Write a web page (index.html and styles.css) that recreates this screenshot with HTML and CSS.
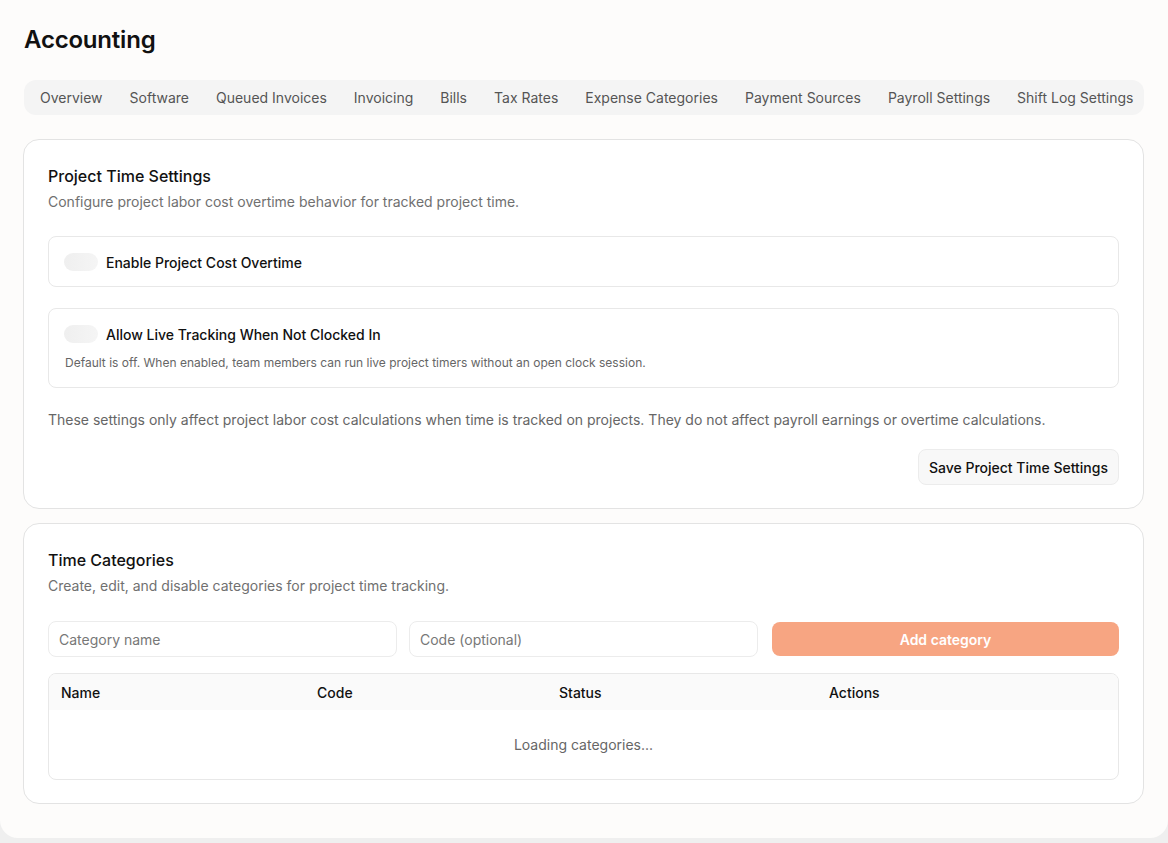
FILE: index.html
```html
<!DOCTYPE html>
<html>
<head>
  <title>Accounting</title>
  <link rel="stylesheet" href="styles.css">
</head>
<body>
  <div class="page">
    <h1>Accounting</h1>

    <nav class="tabs">
      <span class="tab">Overview</span>
      <span class="tab">Software</span>
      <span class="tab">Queued Invoices</span>
      <span class="tab">Invoicing</span>
      <span class="tab">Bills</span>
      <span class="tab">Tax Rates</span>
      <span class="tab">Expense Categories</span>
      <span class="tab">Payment Sources</span>
      <span class="tab">Payroll Settings</span>
      <span class="tab">Shift Log Settings</span>
    </nav>

    <section class="card">
      <h2>Project Time Settings</h2>
      <p class="desc">Configure project labor cost overtime behavior for tracked project time.</p>

      <div class="option">
        <div class="option-row">
          <span class="toggle"></span>
          <span class="option-label">Enable Project Cost Overtime</span>
        </div>
      </div>

      <div class="option">
        <div class="option-row">
          <span class="toggle"></span>
          <span class="option-label">Allow Live Tracking When Not Clocked In</span>
        </div>
        <p class="hint">Default is off. When enabled, team members can run live project timers without an open clock session.</p>
      </div>

      <p class="note">These settings only affect project labor cost calculations when time is tracked on projects. They do not affect payroll earnings or overtime calculations.</p>

      <div class="actions">
        <button class="btn">Save Project Time Settings</button>
      </div>
    </section>

    <section class="card">
      <h2>Time Categories</h2>
      <p class="desc">Create, edit, and disable categories for project time tracking.</p>

      <div class="form-row">
        <input class="field" placeholder="Category name">
        <input class="field" placeholder="Code (optional)">
        <button class="btn-add">Add category</button>
      </div>

      <div class="table-wrap">
        <table>
          <tr>
            <th class="c1">Name</th>
            <th class="c2">Code</th>
            <th class="c3">Status</th>
            <th>Actions</th>
          </tr>
          <tr>
            <td colspan="4" class="loading">Loading categories...</td>
          </tr>
        </table>
      </div>
    </section>
  </div>
</body>
</html>
```

FILE: styles.css
```css
html, body {
  margin: 0;
  padding: 0;
}
body {
  background: #efefef;
  font-family: Inter, "Noto Sans", Arial, sans-serif;
  color: #111;
}
.page {
  background: #fdfcfb;
  height: 838px;
  box-sizing: border-box;
  padding: 24px 24px 0 24px;
  border-radius: 0 0 18px 18px;
}
h1 {
  margin: 0;
  font-size: 24px;
  font-weight: 600;
  line-height: 32px;
  letter-spacing: -0.2px;
}
.tabs {
  margin-top: 24px;
  display: flex;
  gap: 3px;
  background: #f4f4f4;
  border-radius: 12px;
  padding: 0 4px;
  height: 35px;
  align-items: center;
}
.tab {
  padding: 0 12px;
  font-size: 14px;
  color: #555;
  white-space: nowrap;
}
.card {
  margin: 24px 0 0 -1px;
  background: #fff;
  border: 1px solid #e3e3e3;
  border-radius: 16px;
  padding: 24px 24px 23px 24px;
}
.card + .card {
  margin-top: 14px;
}
h2 {
  margin: 1px 0 0 0;
  font-size: 16px;
  font-weight: 500;
  line-height: 22px;
}
.desc {
  margin: 5px 0 0 0;
  font-size: 14px;
  color: #707070;
  line-height: 20px;
}
.option {
  margin-top: 24px;
  border: 1px solid #e8e8e8;
  border-radius: 8px;
  padding: 16px 15px 15px 15px;
}
.option + .option {
  margin-top: 21px;
  padding-bottom: 16px;
}
.option-row {
  display: flex;
  align-items: center;
  gap: 8px;
  height: 18px;
}
.toggle {
  width: 34px;
  height: 18px;
  border-radius: 9px;
  background: linear-gradient(90deg, #efefef, #f5f5f5);
}
.option-label {
  font-size: 14px;
  font-weight: 500;
}
.hint {
  margin: 12px 0 0 1px;
  font-size: 12px;
  color: #666;
  line-height: 16px;
}
.note {
  margin: 22px 0 0 0;
  font-size: 14px;
  color: #666;
  line-height: 20px;
}
.actions {
  display: flex;
  justify-content: flex-end;
  margin-top: 19px;
}
.btn {
  font-family: inherit;
  font-size: 14px;
  font-weight: 500;
  color: #111;
  background: #f8f8f8;
  border: 1px solid #ececec;
  border-radius: 8px;
  height: 36px;
  padding: 0 10px;
}
.form-row {
  margin-top: 25px;
  display: grid;
  grid-template-columns: 1fr 1fr 1fr;
  gap: 12px;
}
.field {
  font-family: inherit;
  font-size: 14px;
  height: 36px;
  box-sizing: border-box;
  border: 1px solid #ececec;
  border-radius: 8px;
  padding: 0 10px;
  outline: none;
}
.field::placeholder {
  color: #777;
}
.btn-add {
  font-family: inherit;
  font-size: 14px;
  font-weight: 600;
  color: #fff;
  background: #f7a582;
  border: none;
  border-radius: 8px;
  height: 34px;
  margin: 1px 0 0 2px;
}
.table-wrap {
  margin-top: 16px;
  border: 1px solid #e8e8e8;
  border-radius: 8px;
  overflow: hidden;
}
table {
  width: 100%;
  border-collapse: collapse;
}
th {
  background: #fafafa;
  text-align: left;
  font-size: 14px;
  font-weight: 500;
  height: 36px;
  padding: 0 12px;
}
.c1 { width: 232px; }
.c2 { width: 218px; }
.c3 { width: 246px; }
.loading {
  text-align: center;
  font-size: 14px;
  color: #666;
  height: 67px;
}
```
